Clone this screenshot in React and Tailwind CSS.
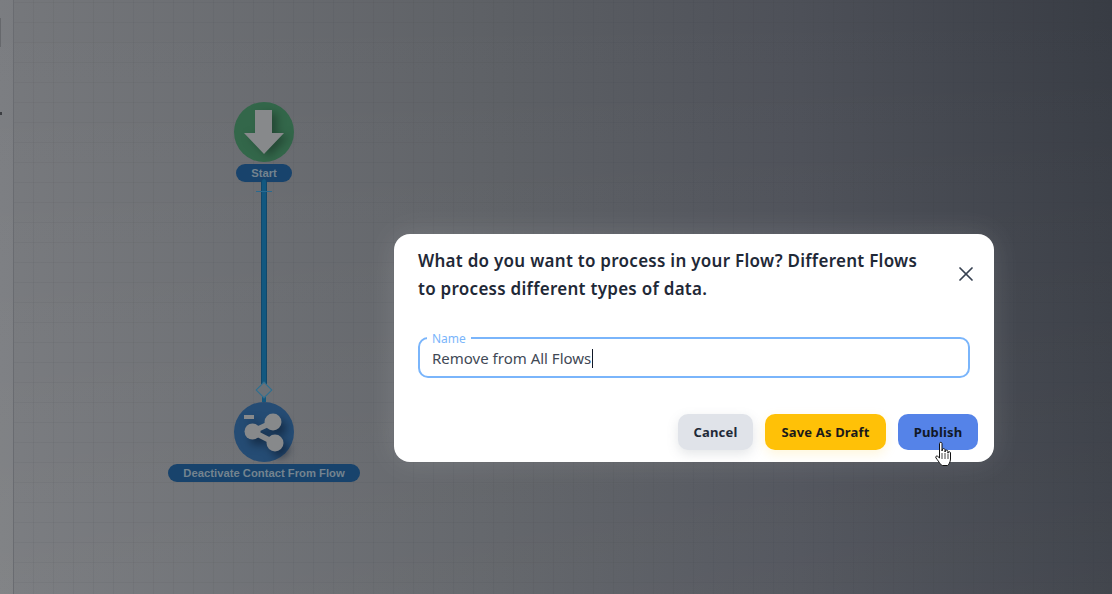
import { X } from "lucide-react";

function StartNode() {
  return (
    <div className="flex h-[60px] w-[60px] shrink-0 items-center justify-center rounded-full bg-[#33674a]">
      <svg className="drop-shadow-[5px_3px_4px_rgba(20,40,30,0.5)]" width="60" height="60" viewBox="0 0 60 60">
        <path d="M21 8h17v23h12L30 52 10 31h11z" fill="#87898b" />
      </svg>
    </div>
  );
}

function ActionNode() {
  return (
    <div className="flex h-[60px] w-[60px] shrink-0 items-center justify-center rounded-full bg-[#254c74]">
      <svg className="drop-shadow-[5px_6px_4px_rgba(10,25,45,0.6)]" width="60" height="60" viewBox="0 0 60 60">
        <rect x="10" y="13" width="10" height="4" fill="#87898b" />
        <path d="M39 20 18.500 29.500 41 41" fill="none" stroke="#87898b" strokeWidth="5.500" />
        <circle cx="39" cy="20" r="8.500" fill="#87898b" />
        <circle cx="18.500" cy="29.500" r="8" fill="#87898b" />
        <circle cx="41" cy="41" r="8.500" fill="#87898b" />
      </svg>
    </div>
  );
}

function NodeLabel({ className, children }) {
  return (
    <div
      className={`relative flex h-[18px] shrink-0 items-center justify-center rounded-full bg-[#18436c] font-['Liberation_Sans',sans-serif] text-[11.25px] font-bold text-[#74838f] ${className}`}
    >
      {children}
    </div>
  );
}

function Connector() {
  return (
    <div className="relative z-10 -mt-[3px] flex flex-col items-center">
      <div className="relative h-[206px] w-[6px] rounded-t-sm border-x border-[#11486b] bg-[#125880]">
        <div className="absolute left-[-6px] top-[12px] h-px w-[16px] bg-[#2a6a90]" />
      </div>
      <div className="z-10 -mt-px h-[12px] w-[12px] rotate-45 border border-[#2a6f93] bg-[#6b7177]" />
      <div className="-mt-px h-[7px] w-[4px] bg-[#125880]" />
    </div>
  );
}

function HandCursor() {
  return (
    <svg className="absolute left-[36px] top-[27px]" width="20" height="26" viewBox="0 0 20 26">
      <path
        d="M5.500 2.500c0-1.600 2.500-1.600 2.500 0V10l.5-2c1-.8 2.300-.3 2.500.5V11l.5-1.500c1-.7 2.300-.2 2.400.8v1.700l.5-1c.9-.6 2.100-.1 2.100 1V18c0 3-2 6-3 6.500H8.500C7 24.500 5.500 21.500 2 17c-.9-1.300.5-2.600 1.700-1.700L5.500 17z"
        fill="#fff"
        stroke="#111"
        strokeWidth="1"
        strokeLinejoin="round"
      />
      <path d="M8 12v6M11 12v6M14 12.500V18" stroke="#111" strokeWidth="0.800" />
    </svg>
  );
}

function Dialog() {
  return (
    <div className="flex h-[228px] w-[600px] flex-col rounded-2xl bg-white pl-6 pr-4 pt-[13px] font-['Noto_Sans',sans-serif] shadow-[0_0_30px_rgba(255,255,255,0.12)]">
      <div className="flex items-start">
        <h2 className="w-[536px] pr-[26px] text-[17px] font-semibold leading-[28px] tracking-[0.27px] text-[#1f2937]">
          What do you want to process in your Flow? Different Flows to process different types of data.
        </h2>
        <button className="mt-[15px] text-[#374151]">
          <X size={24} strokeWidth={1.75} />
        </button>
      </div>
      <div className="relative mt-[34px] w-[552px]">
        <span className="absolute left-[9px] top-[-5px] bg-white px-[5px] text-[12px] leading-[14px] text-[#7ab5fb]">
          Name
        </span>
        <div className="flex h-[41px] items-center rounded-[10px] border-2 border-[#7ab5fb] pl-[12px] pt-px text-[15px] text-[#414855]">
          Remove from All Flows
          <span className="ml-px h-[19px] w-px bg-[#111827]" />
        </div>
      </div>
      <div className="mt-[36px] flex justify-end gap-3 text-[13px] font-bold tracking-[0.15px]">
        <button className="h-9 w-[75px] rounded-[10px] bg-[#e0e3e9] pt-px text-[#1f2937] shadow-[0_4px_12px_rgba(107,114,128,0.18)]">
          Cancel
        </button>
        <button className="h-9 w-[121px] rounded-[10px] bg-[#ffc107] pt-px text-[#1a1a1a] shadow-[0_4px_12px_rgba(255,193,7,0.15)]">
          Save As Draft
        </button>
        <button className="relative h-9 w-[80px] rounded-[10px] bg-[#5583e8] pt-px text-[#111827]">
          Publish
          <HandCursor />
        </button>
      </div>
    </div>
  );
}

export default function App() {
  return (
    <div className="relative flex h-[594px] w-full overflow-hidden bg-[linear-gradient(to_bottom,transparent,rgba(255,255,255,0.05)),linear-gradient(to_right,#76787c_0%,#5d6065_45%,#4d5058_72%,#383c44_100%)]">
      <div className="flex w-[14px] shrink-0 flex-col border-r border-[#6a6c71] bg-[rgba(255,255,255,0.04)]">
        <div className="mt-[18px] h-[29px] w-px bg-[#66686c]" />
        <div className="mt-[65px] h-[3px] w-[2px] bg-[#3c3e42]" />
      </div>
      <div className="flex-1 bg-[linear-gradient(to_right,rgba(40,44,52,0.055)_1px,transparent_1px),linear-gradient(to_bottom,rgba(40,44,52,0.055)_1px,transparent_1px)] bg-[size:20px_20px] bg-[position:19px_2px] pl-[154px] pt-[102px]">
        <div className="flex w-[192px] flex-col items-center">
          <StartNode />
          <NodeLabel className="mt-[2px] w-[56px]">Start</NodeLabel>
          <Connector />
          <ActionNode />
          <NodeLabel className="mt-[2px] w-[192px]">Deactivate Contact From Flow</NodeLabel>
        </div>
      </div>
      <div className="absolute inset-0 pl-[394px] pt-[234px]">
        <Dialog />
      </div>
    </div>
  );
}
